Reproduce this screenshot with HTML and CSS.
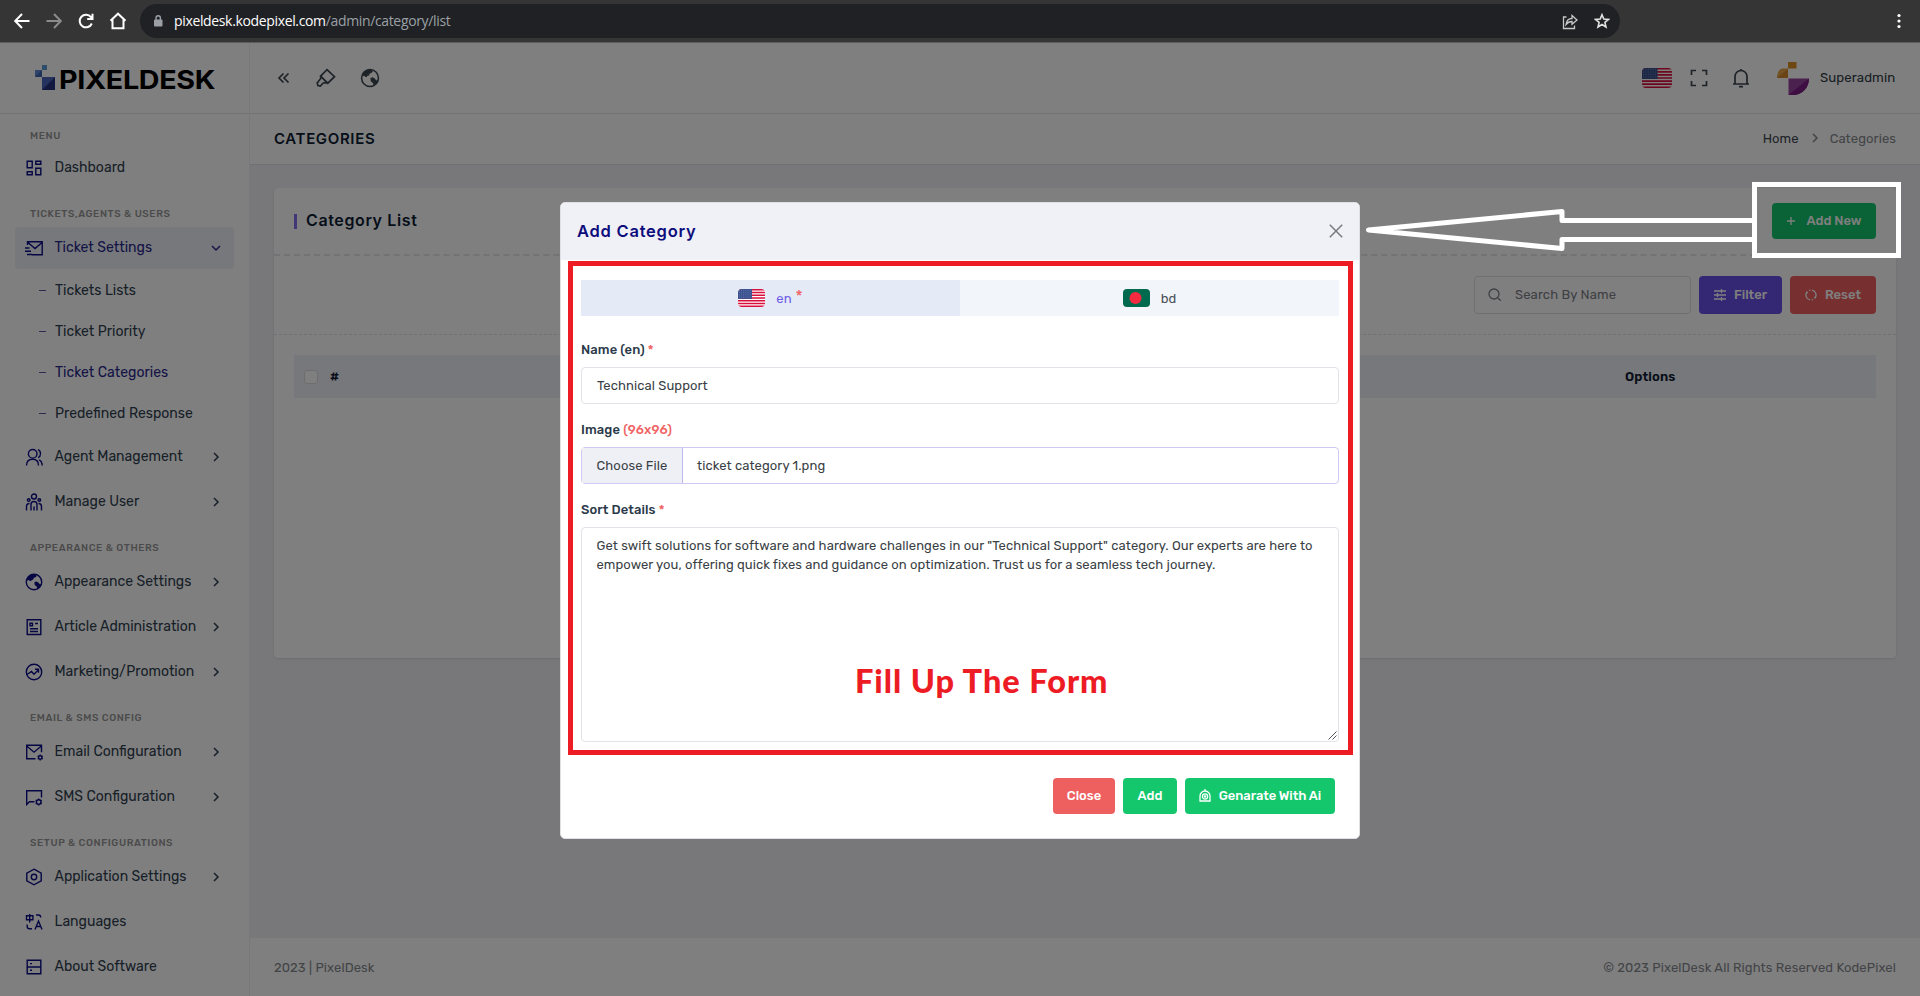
FILE: index.html
```html
<!DOCTYPE html>
<html lang="en">
<head>
<meta charset="utf-8">
<title>Categories - PixelDesk</title>
<link rel="stylesheet" href="styles.css">
</head>
<body>
<svg class="defs" width="0" height="0">
  <symbol id="us" viewBox="0 0 30 20">
    <rect width="30" height="20" fill="#fff"/>
    <path d="M0 .77h30M0 3.85h30M0 6.92h30M0 10h30M0 13.08h30M0 16.15h30M0 19.23h30" stroke="#d80f3c" stroke-width="1.7"/>
    <rect width="15.5" height="11" fill="#3a518f"/>
    <path d="M1 1.5h14M1 4h14M1 6.500h14M1 9h14" stroke="#7f8fbd" stroke-width=".8" stroke-dasharray="1 1.4"/>
  </symbol>
  <symbol id="chev" viewBox="0 0 16 16"><path d="M6 4 10 8 6 12" fill="none" stroke="currentColor" stroke-width="1.5"/></symbol>
  <symbol id="globe" viewBox="0 0 24 24"><circle cx="12" cy="12" r="9.200" fill="none" stroke="currentColor" stroke-width="1.700"/><path fill="currentColor" d="M4.500 7C6.500 4 9.500 2.500 13.500 2.800l1.700 2-1.700 1.700-1.800.5-.7 2.300-2 .2-.3 1.500-1.700-.2L6 9.500l-2.500.8zM12.500 12l2.500-.7 2.200 1.200 1.500 2 2.300.5c-.8 2.700-2.500 4.500-5 5.500l-.8-3-2.400-2z"/></symbol>
</svg>

<div class="browser">
  <div class="nav">
    <svg width="24" height="24" viewBox="0 0 24 24" class="ln w2"><path d="M19.500 12H5.500M12 5l-6.800 7 6.800 7"/></svg>
    <svg width="24" height="24" viewBox="0 0 24 24" class="ln w2 dim"><path d="M4.500 12h14M12 5l6.800 7-6.800 7"/></svg>
    <svg width="24" height="24" viewBox="0 0 24 24" class="ln w2"><path d="M17.800 14.500A6.300 6.300 0 1 1 17 8.200l1 1M18.500 4.700v5.200h-5.300"/></svg>
    <svg width="24" height="24" viewBox="0 0 24 24" class="ln w2"><path d="M4.500 11.800 12 4.700l7.500 7.100M6.500 10.500v8.700h11v-8.700"/></svg>
  </div>
  <div class="url">
    <svg width="10" height="14" viewBox="0 0 10 14"><rect x="1" y="5.500" width="8.500" height="7" rx="1" fill="#9aa0a6"/><path d="M3 6V4a2.200 2.200 0 0 1 4.400 0v2" fill="none" stroke="#9aa0a6" stroke-width="1.400"/></svg>
    <span class="addr"><b>pixeldesk.kodepixel.com</b>/admin/category/list</span>
    <svg width="17" height="17" viewBox="0 0 17 17" class="ln thin share"><path d="M4.500 4H1.500v11.500h11v-3M4 11.500c.5-4 3-6 6-6V2.500l5 4.500-5 4.300V8.500c-3 0-4.500 1-6 3z"/></svg>
    <svg width="16" height="16" viewBox="0 0 16 16" class="ln bright"><path d="M8 1.700 9.800 6l4.700.4-3.600 3 1.100 4.600L8 11.500 4 14l1.100-4.600-3.600-3L6.200 6z"/></svg>
  </div>
  <svg class="dots" width="4" height="16" viewBox="0 0 4 16" fill="#fff"><circle cx="2" cy="2.500" r="1.600"/><circle cx="2" cy="8" r="1.600"/><circle cx="2" cy="13.500" r="1.600"/></svg>
</div>

<div class="app">
  <aside class="side">
    <div class="logo">
      <svg width="22" height="26" viewBox="0 0 22 26"><path fill="#5b9bd5" d="M7 0h5v5H7z"/><path fill="#3f66b5" d="M0 5h7v7H0z"/><path fill="#638bd8" d="M0 5h7L0 12z"/><path fill="#4a66bd" d="M7 12h13v13H7z"/><path fill="#25307f" d="M20 12v13H7z"/></svg>
      <span>PIXELDESK</span>
    </div>
    <nav class="menu">
      <h6 class="first">MENU</h6>
      <a class="row"><svg class="ic" viewBox="0 0 18 18"><path d="M2.200 2.200h5v6.600h-5zM10.800 2.200h5v3h-5zM10.800 9.200h5v6.600h-5zM2.200 12.800h5v3h-5z"/></svg><span>Dashboard</span></a>
      <h6>TICKETS,AGENTS &amp; USERS</h6>
      <a class="row on"><svg class="ic" viewBox="0 0 18 18"><path d="M2.500 6V2.700h14.700v13H7M3 3.500l7 6 7-6M0 9h4.500M0 12.200h6M2 15.500h5"/></svg><span>Ticket Settings</span><svg class="ch down"><use href="#chev"/></svg></a>
      <a class="sub">Tickets Lists</a>
      <a class="sub">Ticket Priority</a>
      <a class="sub cur">Ticket Categories</a>
      <a class="sub">Predefined Response</a>
      <a class="row"><svg class="ic" viewBox="0 0 18 18"><circle cx="7.700" cy="5.800" r="4.300"/><path d="M1.500 17.500c0-4 2.500-6.200 6.200-6.200s5.800 2.200 5.800 6.200M13 1.700c3.300 1.500 3.300 6.300 0 8M14 11.800c2 1 3.200 3 3.200 5.700"/></svg><span>Agent Management</span><svg class="ch"><use href="#chev"/></svg></a>
      <a class="row"><svg class="ic" viewBox="0 0 18 18"><circle cx="9" cy="3.500" r="2.500"/><circle cx="3.700" cy="7" r="1.300"/><circle cx="14.300" cy="7" r="1.300"/><path d="M6 17.500v-6c0-4 6-4 6 0v6M1.500 17.500v-4c0-2 1-3 3-3M16.500 17.500v-4c0-2-1-3-3-3M9 13.500v4"/></svg><span>Manage User</span><svg class="ch"><use href="#chev"/></svg></a>
      <h6>APPEARANCE &amp; OTHERS</h6>
      <a class="row"><svg class="ic fill"><use href="#globe"/></svg><span>Appearance Settings</span><svg class="ch"><use href="#chev"/></svg></a>
      <a class="row"><svg class="ic" viewBox="0 0 18 18"><path d="M2.200 1.800h13.600v14.700H2.200zM5 5.200h2.500v2.500H5zM10 5.500h3M5 10.700h8M5 13.500h8"/></svg><span>Article Administration</span><svg class="ch"><use href="#chev"/></svg></a>
      <a class="row"><svg class="ic" viewBox="0 0 18 18"><circle cx="9" cy="9" r="7.700"/><path d="M2 11.500 6.500 8.500l2.500 2.700 4.500-4.500M10 6.200h3.500v3.500"/></svg><span>Marketing/Promotion</span><svg class="ch"><use href="#chev"/></svg></a>
      <h6>EMAIL &amp; SMS CONFIG</h6>
      <a class="row"><svg class="ic" viewBox="0 0 18 18"><path d="M10.500 15.800H1.700V2.200h14.800v7M2 3.200l7 6 7-6"/><circle cx="15.200" cy="14.500" r="1.700"/><path d="M15.200 11.500v1.300M15.200 16.200v1.300M12.600 13l1.200.700M16.600 15.300l1.200.700M12.600 16l1.200-.7M16.600 13.700l1.200-.7"/></svg><span>Email Configuration</span><svg class="ch"><use href="#chev"/></svg></a>
      <a class="row"><svg class="ic" viewBox="0 0 18 18"><path d="M9.500 13.800H4.500L1.700 16.500V2.800h14.800v6.700"/><circle cx="13.700" cy="14" r="2.300"/><path d="M13.700 10.500v1.200M13.700 16.300v1.200M10.700 12.200l1 .6M15.700 15.200l1 .6M10.700 15.800l1-.6M15.700 12.800l1-.6"/></svg><span>SMS Configuration</span><svg class="ch"><use href="#chev"/></svg></a>
      <h6>SETUP &amp; CONFIGURATIONS</h6>
      <a class="row"><svg class="ic" viewBox="0 0 18 18"><path d="m9 1.200 7.200 4v7.600L9 16.800l-7.200-4V5.200z"/><circle cx="9" cy="9" r="2.700"/></svg><span>Application Settings</span><svg class="ch"><use href="#chev"/></svg></a>
      <a class="row"><svg class="ic" viewBox="0 0 18 18"><path d="M1.500 2.700h6.400v4H1.500zM4.700 1v8.500M11 2h2.500c1.500 0 2.200.8 2.200 2.500M2.200 11.500v2c0 1.500.8 2.200 2.300 2.200H7M10 16.500l3.500-8.500 3.500 8.500M11.200 13.500h4.600"/></svg><span>Languages</span></a>
      <a class="row"><svg class="ic" viewBox="0 0 18 18"><path d="M2.200 2.200h13.600v13.600H2.200zM2.200 9h13.600M5 5.600h2M5 12.300h2"/></svg><span>About Software</span></a>
    </nav>
  </aside>

  <div class="main">
    <header class="top">
      <svg width="18" height="18" viewBox="0 0 18 18" class="hi t1"><path d="M9.500 4.500 5 9l4.500 4.500M14.500 4.500 10 9l4.500 4.500"/></svg>
      <svg width="20" height="20" viewBox="0 0 20 20" class="hi t2"><path d="m11 1.700 7.500 7-6.700 6.500-7.300-7zM5.700 7.200l-1.500 4-3 3.800.7 2.500 2.500.5 2.800-3 3.800-.3"/></svg>
      <svg width="22" height="22" class="t3"><use href="#globe"/></svg>
      <span class="grow"></span>
      <svg width="30" height="20" class="flag"><use href="#us"/></svg>
      <svg width="18" height="18" viewBox="0 0 18 18" class="hi fs"><path d="M1.500 6V1.500h4.500M12 1.500h4.500V6M16.500 12v4.500H12M6 16.500H1.500V12"/></svg>
      <svg width="18" height="20" viewBox="0 0 18 20" class="hi bell"><path d="M1 16h16M3 16V8.500a6 6 0 0 1 12 0V16M7 18.700h4M9 2.500V1"/></svg>
      <svg width="32" height="33" viewBox="0 0 32 33" class="av"><path fill="#dd9023" d="M11 0h8.500v6.500H11z"/><path fill="#e7a548" d="M0 16C0 11 2 7 5 6.500h6V16z"/><path fill="#d4892e" d="M11 6.500V16H0z"/><path fill="#97429f" d="M11.500 16.500H32C32 26 25 33 16 33h-4.500z"/><path fill="#7c1b84" d="M32 16.500C32 26 25 33 16 33h-4.500z"/></svg>
      <span class="who">Superadmin</span>
    </header>
    <div class="crumb">
      <h4>CATEGORIES</h4>
      <span class="home">Home</span><svg class="ch"><use href="#chev"/></svg><span class="here">Categories</span>
    </div>
    <div class="body">
      <section class="card">
        <div class="chead"><i></i><h5>Category List</h5><button class="btn green add"><svg width="10" height="10" viewBox="0 0 10 10" class="ln"><path d="M5 1v8M1 5h8"/></svg>Add New</button></div>
        <div class="filters">
          <div class="search"><svg width="14" height="14" viewBox="0 0 14 14" class="ln"><circle cx="6" cy="6" r="5"/><path d="m9.700 9.700 3 3"/></svg>Search By Name</div>
          <button class="btn violet"><svg width="12" height="12" viewBox="0 0 12 12" class="ln"><path d="M0 2h12M0 6h12M0 10h12M7.500 0v4M3.500 4v4M7.500 8v4"/></svg>Filter</button>
          <button class="btn red"><svg width="12" height="12" viewBox="0 0 12 12" class="ln"><path d="M5 10.900A5 5 0 0 1 2.200 2.700M7 1.100a5 5 0 0 1 2.800 8.200M1 3.500h2M9 8.500h2M4 1.500l1.500-.5M6.500 11l1.500-.5"/></svg>Reset</button>
        </div>
        <div class="thead"><span class="cb"></span><b>#</b><b class="opt">Options</b></div>
      </section>
    </div>
    <footer><span>2023 | PixelDesk</span><span>© 2023 PixelDesk All Rights Reserved KodePixel</span></footer>
  </div>
</div>

<div class="backdrop">
  <div class="modal">
    <div class="mhead"><h3>Add Category</h3><svg width="14" height="14" viewBox="0 0 14 14"><path d="m.8.8 12.400 12.400M13.200.8.8 13.200" stroke="#77797d" stroke-width="1.500"/></svg></div>
    <div class="mbody">
      <div class="tabs">
        <div class="tab sel"><svg width="27" height="18" class="flag" preserveAspectRatio="none"><use href="#us"/></svg><span>en</span><em>*</em></div>
        <div class="tab"><svg width="27" height="18" viewBox="0 0 27 18" class="flag"><rect width="27" height="18" fill="#006a4e"/><circle cx="12.500" cy="9" r="6" fill="#f42a41"/></svg><span>bd</span></div>
      </div>
      <label>Name (en) <em>*</em></label>
      <div class="inp">Technical Support</div>
      <label>Image <em class="sz">(96x96)</em></label>
      <div class="inp file"><span class="pick">Choose File</span><span>ticket category 1.png</span></div>
      <label>Sort Details <em>*</em></label>
      <div class="inp area">
        <p class="l1">Get swift solutions for software and hardware challenges in our "Technical Support" category. Our experts are here to</p>
        <p class="l2">empower you, offering quick fixes and guidance on optimization. Trust us for a seamless tech journey.</p>
        <svg class="grip" width="9" height="9" viewBox="0 0 9 9"><path d="M.5 8.500l8-8M4.500 8.500l4-4" stroke="#555" stroke-width="1"/></svg>
      </div>
    </div>
    <div class="mfoot">
      <button class="btn red">Close</button><button class="btn green">Add</button>
      <button class="btn green gen"><svg width="12" height="13" viewBox="0 0 12 13" class="ln"><path d="M1 12V7a5 5 0 0 1 10 0v5zM6 0v2"/><circle cx="6" cy="7.500" r="2.600"/><circle cx="6" cy="7.500" r=".6"/></svg>Genarate With Ai</button>
    </div>
    <div class="redbox"></div>
    <div class="note">Fill Up The Form</div>
  </div>
</div>

<svg class="arrow" width="540" height="80" viewBox="1364 180 540 80"><path d="M1754.500 184.500h144v71h-144z" stroke-width="5"/><path d="M1752 220.500h-190v-9L1368.500 230l193.500 18.500v-9h190" stroke-width="5" stroke-linejoin="round"/></svg>
</body>
</html>
```
FILE: styles.css
```css
* { box-sizing: border-box; margin: 0; padding: 0; }
body { width: 1920px; height: 996px; overflow: hidden; display: flex; flex-direction: column; background: #808080; font-family: Rubik, Roboto, sans-serif; font-size: 13px; position: relative; }
button { font: inherit; border: 0; }
em { font-style: normal; }
.defs { position: absolute; }
.ln { fill: none; stroke: currentColor; stroke-width: 1.3; }
.w2 { stroke-width: 2; color: #fff; }
.dim { color: #8b8b8b; }
.bright { color: #e3e3e3; stroke-width: 1.6; }

.browser { height: 43px; flex: none; background: #353535; border-bottom: 1px solid #5c5c5c; display: flex; align-items: center; padding: 0 19px 0 10px; }
.nav { display: flex; gap: 8px; width: 130px; }
.url { width: 1480px; height: 34px; border-radius: 17px; background: #202124; display: flex; align-items: center; padding: 0 10px 0 13px; color: #9aa0a6; }
.addr { font: 14px "Open Sans", sans-serif; letter-spacing: -.35px; margin: 0 0 1px 11px; flex: 1; }
.addr b { font-weight: 400; color: #fff; }
.share { margin-right: 15px; color: #c8c8c8; }
.dots { margin-left: auto; }

.app { flex: 1; display: flex; background: #fff; min-height: 0; }
.side { width: 250px; border-right: 1px solid #f0f0f3; overflow: hidden; }
.logo { height: 71px; border-bottom: 1px solid #e4e4e8; display: flex; align-items: center; padding-left: 35px; color: #000; }
.logo span { font: 700 25.500px Inter, sans-serif; letter-spacing: -.3px; margin: 2px 0 0 2px; transform: scaleX(1.125); transform-origin: left; }
.menu { display: flex; flex-direction: column; }
h6 { height: 35px; flex: none; padding: 18px 0 0 30px; font-size: 10px; line-height: 12px; font-weight: 500; letter-spacing: .58px; color: #969696; }
h6.first { height: 31px; padding-top: 16px; }
.row { height: 42px; flex: none; margin: 1.500px 15px; display: flex; align-items: center; padding: 0 10px; font-size: 14px; color: #2f3f50; border-radius: 4px; }
.row span { margin-left: 11.500px; flex: 1; }
.row.on { background: #eef0f7; color: #28288c; }
.ic { width: 18px; height: 18px; fill: none; stroke: #0c0c88; stroke-width: 1.4; color: #0c0c88; }
.ic.fill { stroke: none; transform: scale(1.12); }
.ch { width: 16px; height: 16px; }
.down { transform: rotate(90deg); }
.sub { height: 41px; flex: none; display: flex; align-items: center; font-size: 14px; color: #2f3f50; padding-left: 39px; }
.sub::before { content: ""; width: 7px; height: 1px; background: #5858a0; margin-right: 9px; }
.cur { color: #28288c; }

.main { flex: 1; display: flex; flex-direction: column; background: #f1f1f6; }
.top { height: 71px; background: #fff; border-bottom: 1px solid #e4e4e8; display: flex; align-items: center; padding: 0 24px; color: #3c4650; }
.hi { fill: none; stroke: currentColor; stroke-width: 1.7; }
.t2 { margin-left: 24px; }
.t3 { margin-left: 23px; }
.grow { flex: 1; }
.flag { border-radius: 4px; }
.fs { margin-left: 18px; }
.bell { margin-left: 24px; }
.av { margin-left: 27px; }
.who { margin: 0 0 2px 11px; width: 76px; letter-spacing: .1px; font-size: 13.200px; color: #303a44; }
.crumb { height: 51px; background: #fff; border-bottom: 1px solid #e0e0e6; display: flex; align-items: center; padding: 0 24px 2px; color: #85888e; letter-spacing: .1px; }
h4 { flex: 1; font: 600 15px Inter, sans-serif; letter-spacing: .65px; padding-top: 1px; color: #0c1c34; }
.home { color: #3c4650; }
.crumb .ch { margin: 0 7px 0 8px; }
.body { flex: 1; padding: 23px 24px 0; }
.card { height: 470px; background: #fff; border-radius: 4px; box-shadow: 0 1px 3px #0000001c; }
.chead { height: 68px; display: flex; align-items: center; padding: 0 20px; border-bottom: 2px dashed #e6e6ea; }
.chead i { width: 3px; height: 15px; background: #8070ee; }
h5 { font: 600 16px Inter, sans-serif; letter-spacing: .62px; margin: 0 0 2px 9px; flex: 1; color: #0c1c34; }
.btn { height: 36px; border-radius: 4px; color: #fff; display: flex; align-items: center; justify-content: center; font-weight: 500; padding-bottom: 1px; }
.green { background: #14c76d; }
.red { background: #ee5f60; }
.violet { background: #6950e8; }
.add { width: 104px; gap: 10px; }
.filters { height: 79px; display: flex; align-items: center; justify-content: flex-end; gap: 8px; padding-right: 20px; border-bottom: 1px dashed #e2e2e6; }
.filters .btn { height: 38px; gap: 8px; width: 83px; }
.filters .red { width: 86px; }
.search { width: 217px; height: 38px; border: 1px solid #dedee2; border-radius: 4px; display: flex; align-items: center; padding: 0 0 1px 13px; gap: 13px; color: #7c8088; letter-spacing: .12px; }
.thead { height: 43px; margin: 20px 20px 0; background: #eef0f6; display: flex; align-items: center; padding-left: 10px; color: #101c34; }
.cb { width: 14px; height: 14px; border: 1px solid #dcdce2; border-radius: 3px; background: #fff; margin-right: 12px; }
.thead b { font-weight: 600; letter-spacing: .1px; }
.opt { margin-left: 1286px; }
footer { height: 58px; background: #fff; display: flex; align-items: center; justify-content: space-between; padding: 0 24px; color: #85888e; letter-spacing: .1px; }

.backdrop { position: absolute; inset: 43px 0 0; background: rgba(0, 0, 0, .5); padding: 159px 0 0 560px; }
.modal { position: relative; width: 800px; height: 637px; background: #fff; border: 1px solid #dfe0e4; border-radius: 5px; overflow: hidden; }
.mhead { height: 57px; background: #f0f1f7; display: flex; align-items: center; justify-content: space-between; padding: 0 16px 1px; }
h3 { font: 600 16.500px Inter, sans-serif; letter-spacing: .75px; color: #0d0d7c; }
.mbody { padding: 20px 20px 0; }
.tabs { display: flex; height: 36px; margin-bottom: 24px; }
.tab { flex: 1; background: #f2f5f9; display: flex; align-items: center; justify-content: center; color: #495057; }
.tab span { margin-left: 11px; letter-spacing: .1px; }
.sel { background: #e4ebf7; color: #6c5ce7; }
.tab em { margin: -4px 0 0 4px; font-size: 16px; }
.mbody em { color: #f06565; }
label { display: block; height: 27px; line-height: 19px; font-weight: 500; letter-spacing: .1px; color: #2b3a4a; }
.inp { height: 37px; border: 1px solid #e2e3e8; border-radius: 4px; display: flex; align-items: center; padding-left: 15px; margin-bottom: 16px; color: #3a3f45; letter-spacing: .09px; position: relative; }
.file { border-color: #cfc9f3; padding: 0; }
.pick { width: 101px; align-self: stretch; display: flex; align-items: center; justify-content: center; background: #eef0f6; border-right: 1px solid #bfb8f0; margin-right: 14px; }
.area { height: 215px; display: block; padding: 8px 0 0 14.500px; line-height: 19px; white-space: nowrap; }
.area .l1 { letter-spacing: .09px; }
.area .l2 { letter-spacing: .07px; }
.grip { position: absolute; right: 1px; bottom: 1px; }
.mfoot { display: flex; gap: 8px; justify-content: flex-end; padding: 20px 24px 0; }
.mfoot .red { width: 62px; }
.mfoot .green { width: 54px; }
.mfoot .gen { width: 150px; gap: 8px; letter-spacing: -.08px; }
.redbox { position: absolute; left: 7px; top: 58px; width: 785px; height: 494px; border: 5px solid #ed1c24; }
.note { position: absolute; left: 294px; top: 458px; font: 900 32.500px/40px Lato, sans-serif; letter-spacing: .95px; color: #ed1c24; white-space: nowrap; }
.arrow { position: absolute; left: 1364px; top: 180px; fill: none; stroke: #fff; }
```
